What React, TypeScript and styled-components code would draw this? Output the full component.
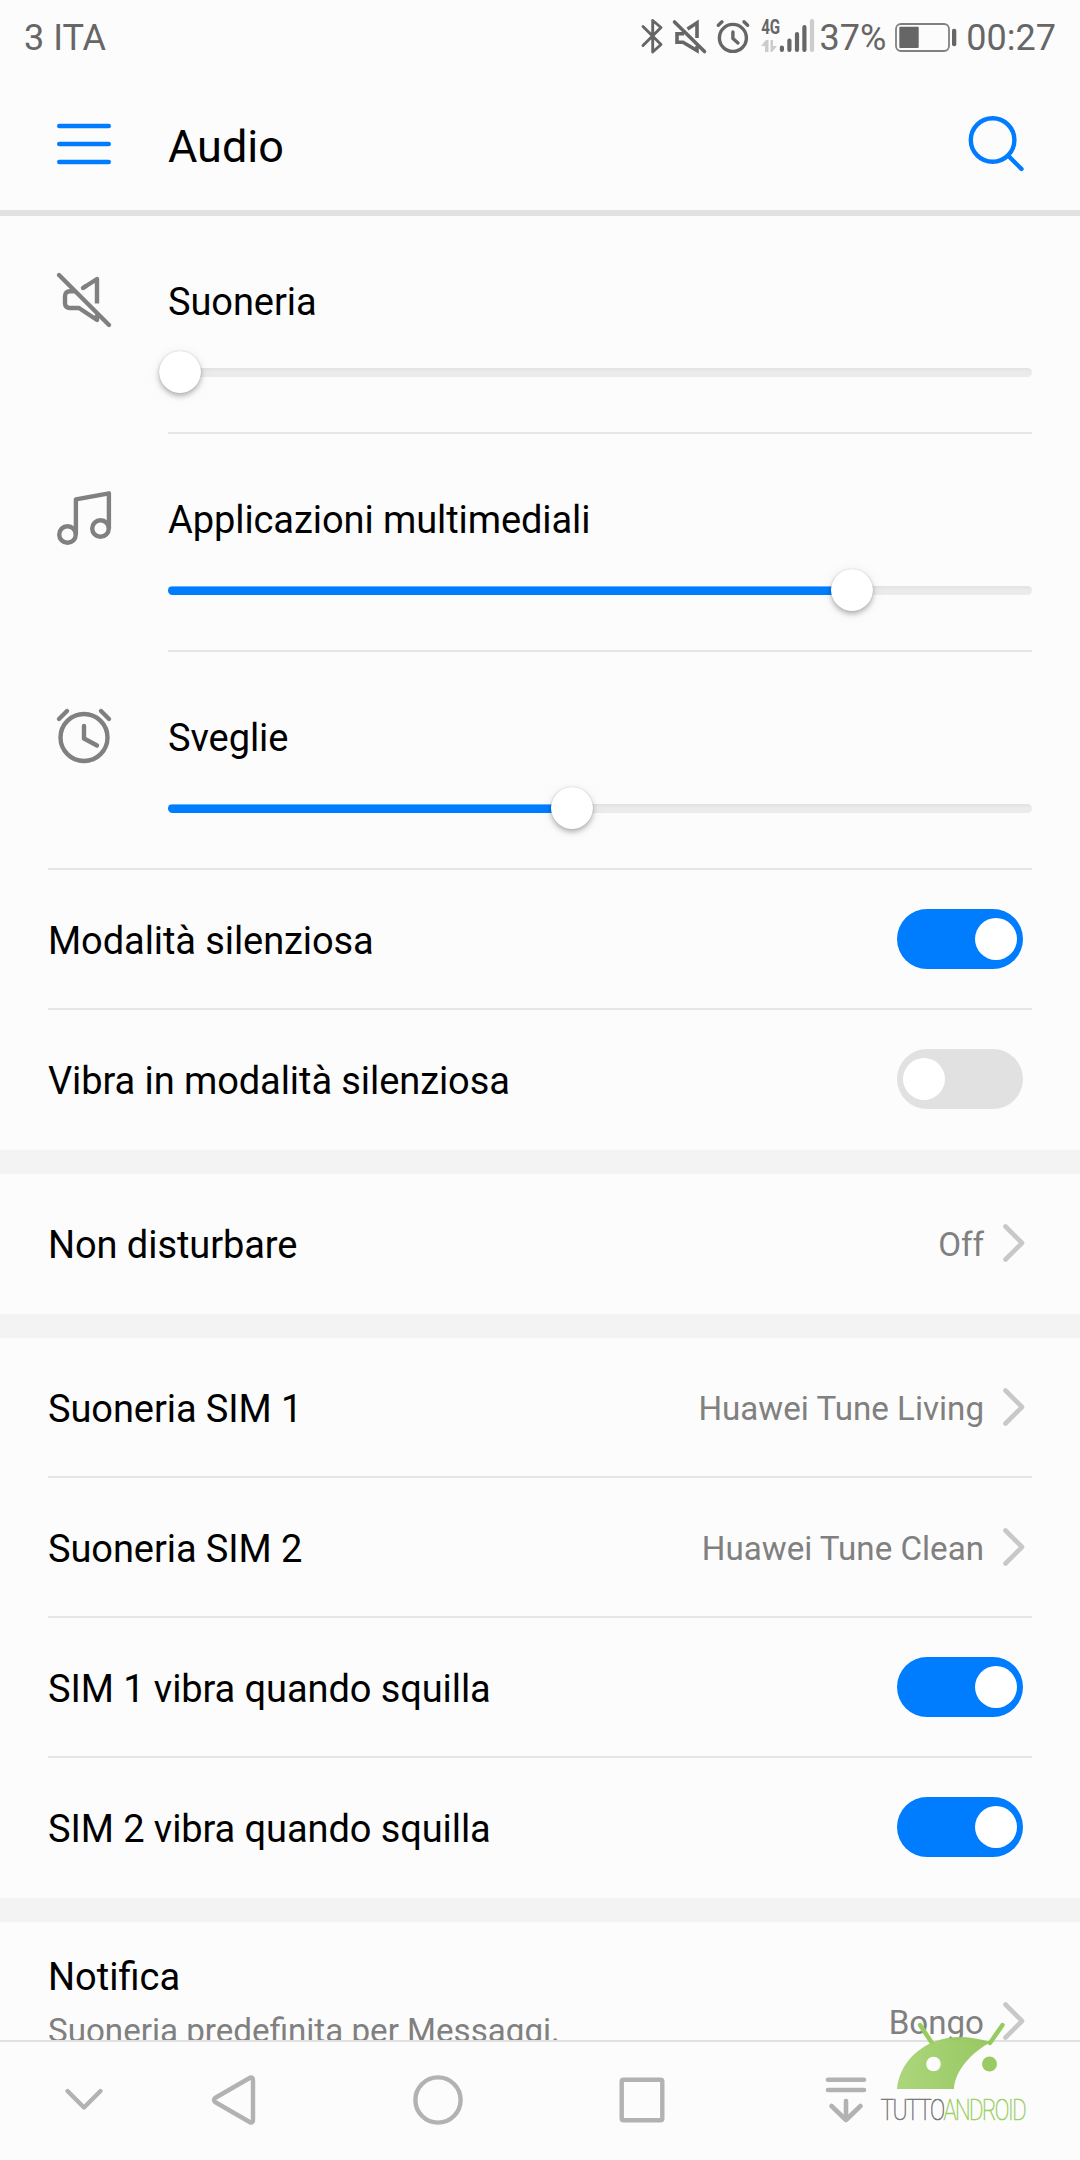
import React from 'react';
import styled, { createGlobalStyle } from 'styled-components';

const GlobalStyle = createGlobalStyle`
  * { box-sizing: border-box; }
  body { margin: 0; background: #fcfcfc; font-family: Roboto, sans-serif; }
  svg { display: block; flex: none; overflow: visible; }
`;

const BLUE = '#007dff';

const Screen = styled.div`
  position: relative;
  width: 1080px;
  height: 2160px;
  display: flex;
  flex-direction: column;
  overflow: hidden;
  background: #fcfcfc;
  color: #000;
`;

const StatusBar = styled.header`
  height: 72px;
  flex: none;
  display: flex;
  align-items: center;
  padding: 0 24px;
  color: #666;
  font-size: 36px;
  line-height: 44px;
`;

const Carrier = styled.span`
  flex: 1;
  padding-top: 4px;
`;

const StatusText = styled.span<{ $left?: number }>`
  padding-top: 4px;
  margin-left: ${(p) => p.$left ?? 0}px;
`;

const StatusIcon = styled.svg<{ $left?: number }>`
  margin-left: ${(p) => p.$left ?? 0}px;
`;

const TitleBar = styled.div`
  height: 144px;
  flex: none;
  display: flex;
  align-items: center;
  padding: 4px 54px 0;
  border-bottom: 6px solid #e1e1e1;
`;

const Title = styled.h1`
  flex: 1;
  margin: 8px 0 0 54px;
  font-size: 45px;
  font-weight: 400;
  line-height: 54px;
`;

const List = styled.main`
  flex: 1;
  min-height: 0;
  overflow: hidden;
`;

const Section = styled.section`
  & + & { border-top: 24px solid #f3f3f3; }
`;

const VolumeRow = styled.div<{ $full?: boolean }>`
  height: 218px;
  display: flex;
  margin: 0 48px;
  padding-left: 6px;
  border-bottom: ${(p) => (p.$full ? '2px solid #e6e6e6' : 'none')};
`;

const VolumeIcon = styled.svg`
  margin: 54px 60px 0 0;
`;

const VolumeBody = styled.div<{ $full?: boolean }>`
  flex: 1;
  padding-top: 62px;
  border-bottom: ${(p) => (p.$full ? 'none' : '2px solid #e6e6e6')};
`;

const Label = styled.div`
  font-size: 38px;
  line-height: 48px;
  letter-spacing: -0.08px;
`;

const NoticeLabel = styled(Label)`
  letter-spacing: normal;
`;

const Track = styled.div`
  position: relative;
  height: 9px;
  margin-top: 42px;
  border-radius: 5px;
  background: linear-gradient(#e2e2e2, #ebebeb 45%);
`;

const Fill = styled.div`
  height: 9px;
  border-radius: 5px;
  background: linear-gradient(#66b1ff 1px, ${BLUE} 1px);
`;

const Thumb = styled.div`
  position: absolute;
  top: -17px;
  width: 42px;
  height: 42px;
  border-radius: 50%;
  background: #fff;
  transform: translateX(-50%);
  box-shadow: 0 3px 5px rgba(0, 0, 0, 0.25), 0 2px 14px rgba(0, 0, 0, 0.07), 0 0 1px rgba(0, 0, 0, 0.25);
`;

const Row = styled.div`
  height: 140px;
  display: flex;
  align-items: center;
  margin: 0 48px;
  border-bottom: 2px solid #e6e6e6;
  &:last-child { border-bottom-color: transparent; }
`;

const RowLabel = styled(Label)`
  flex: 1;
  padding-top: 3px;
`;

const Value = styled.span`
  padding-top: 4px;
  margin-right: 19px;
  color: #808080;
  font-size: 33.15px;
  line-height: 42px;
`;

const Switch = styled.div<{ $on: boolean }>`
  width: 126px;
  height: 60px;
  margin-right: 9px;
  padding: 9px 6px;
  display: flex;
  justify-content: ${(p) => (p.$on ? 'flex-end' : 'flex-start')};
  border-radius: 30px;
  background: ${(p) => (p.$on ? BLUE : '#e1e1e1')};
`;

const Knob = styled.div`
  width: 42px;
  height: 42px;
  border-radius: 50%;
  background: #fff;
`;

const NoticeRow = styled.div`
  height: 200px;
  display: flex;
  margin: 0 48px;
  padding-top: 31px;
`;

const NoticeText = styled.div`
  flex: 1;
`;

const Summary = styled.div`
  margin-top: 10px;
  color: #808080;
  font-size: 33.15px;
  line-height: 40px;
`;

const NoticeValue = styled.div`
  display: flex;
  align-items: center;
  height: 136px;
`;

const NavBar = styled.nav`
  height: 120px;
  flex: none;
  display: flex;
  align-items: center;
  padding-bottom: 2px;
  border-top: 2px solid #e1e1e1;
`;

const NavIcon = styled.svg<{ $left: number }>`
  margin-left: ${(p) => p.$left}px;
`;

const Watermark = styled.svg`
  position: absolute;
  left: 880px;
  top: 2020px;
`;

const MuteIcon = () => (
  <VolumeIcon width="54" height="54" viewBox="0 -3.5 54 54" fill="none" stroke="#808080" strokeWidth="4.4" strokeLinecap="round">
    <path d="M5 1.5 L55 51.5" />
    <path d="M29 14.5 L43 5.5 V30" strokeLinejoin="round" strokeLinecap="butt" />
    <path d="M29 14.5 L32 12.5" />
    <path d="M22 17.8 H16 Q11 17.8 11 22.8 V29.5 Q11 34.5 16 34.5 H25 L43 46.5 V41" strokeLinecap="butt" strokeLinejoin="round" />
  </VolumeIcon>
);

const MusicIcon = () => (
  <VolumeIcon width="54" height="54" viewBox="0 0 54 54" fill="none" stroke="#808080" strokeWidth="4.4" strokeLinejoin="round">
    <circle cx="13.5" cy="46.5" r="8.3" />
    <circle cx="46.5" cy="40.5" r="8.3" />
    <path d="M21.9 46.5 V11.3 L54.9 5.3 V40.5" />
  </VolumeIcon>
);

const AlarmIcon = () => (
  <VolumeIcon width="54" height="54" viewBox="0 0 54 54" fill="none" stroke="#808080" strokeWidth="4.4" strokeLinecap="round">
    <circle cx="30" cy="31.5" r="23.5" />
    <path d="M30 20 V32.5 L43 39.5 M5 13 L13 5 M47 5 L55 13" strokeLinejoin="round" />
  </VolumeIcon>
);

const Chevron = () => (
  <svg width="29" height="42" viewBox="0 0 29 42" fill="none" stroke="#c8c8c8" strokeWidth="4.6" strokeLinecap="round" strokeLinejoin="round">
    <path d="M2.5 4.5 L19 21 L2.5 37.5" />
  </svg>
);

type Volume = { label: string; icon: React.ReactNode; level: number };

const volumes: Volume[] = [
  { label: 'Suoneria', icon: <MuteIcon />, level: 0 },
  { label: 'Applicazioni multimediali', icon: <MusicIcon />, level: 0.8155 },
  { label: 'Sveglie', icon: <AlarmIcon />, level: 0.4757 },
];

const Slider = ({ level }: { level: number }) => {
  const x = 12 + level * 824;
  return (
    <Track>
      {level > 0 && <Fill style={{ width: x }} />}
      <Thumb style={{ left: x }} />
    </Track>
  );
};

const ToggleRow = ({ label, on }: { label: string; on: boolean }) => (
  <Row>
    <RowLabel>{label}</RowLabel>
    <Switch $on={on}><Knob /></Switch>
  </Row>
);

const LinkRow = ({ label, value }: { label: string; value: string }) => (
  <Row>
    <RowLabel>{label}</RowLabel>
    <Value>{value}</Value>
    <Chevron />
  </Row>
);

export default function App() {
  return (
    <Screen>
      <GlobalStyle />
      <StatusBar>
        <Carrier>3 ITA</Carrier>
        <StatusIcon width="22" height="36" viewBox="0 0 22 36" fill="none" stroke="#666" strokeWidth="2.9" strokeLinejoin="round" strokeLinecap="round">
          <path d="M2 8.5 L20 26.5 L11.7 34 V2.5 L20 9.5 L2 27.5" />
        </StatusIcon>
        <StatusIcon $left={9} width="34" height="36" viewBox="0 0 34 36" fill="none" stroke="#666" strokeWidth="3.6">
          <path d="M2.5 4 L32.5 33.5" strokeLinecap="round" />
          <path d="M15.5 11 L25 4.8 V20 M12 15.8 H5 V24.3 H11 L25 32.5 V28" />
        </StatusIcon>
        <StatusIcon $left={10} width="34" height="36" viewBox="0 0 34 36" fill="none" stroke="#666" strokeWidth="3.4" strokeLinecap="round" strokeLinejoin="round">
          <circle cx="16.9" cy="19.9" r="13.5" />
          <path d="M16.9 14 V20.5 L22 25 M2.3 7.3 L6 3.8 M28 3.8 L31.6 7.3" />
        </StatusIcon>
        <StatusIcon $left={11} width="56" height="36" viewBox="0 0 56 36">
          <text x="0.2" y="15.7" fontFamily="Roboto, sans-serif" fontWeight="700" fontSize="19.5" textLength="19" lengthAdjust="spacingAndGlyphs" fill="#666">4G</text>
          <path d="M0 28 L5 22 H7.5 V34 H4 V28 Z M9.5 22 H12 V28 H16 L11 34 H9.5 Z" fill="#ccc" />
          <g strokeWidth="4.2" strokeLinecap="round" stroke="#666">
            <path d="M20.9 29.5 V31.9 M28.4 22.5 V31.9 M36 16 V31.9 M43.4 9.2 V31.9" />
            <path d="M51 3.2 V31.9" stroke="#ccc" />
          </g>
        </StatusIcon>
        <StatusText $left={3}>37%</StatusText>
        <StatusIcon $left={9} width="62" height="36" viewBox="0 0 62 36">
          <rect x="1" y="6" width="53" height="27" rx="5" fill="none" stroke="#808080" strokeWidth="1.8" />
          <rect x="4.3" y="8.8" width="19.4" height="21.2" rx="1" fill="#666" />
          <rect x="57" y="10.7" width="4.3" height="17.6" rx="2" fill="#666" />
        </StatusIcon>
        <StatusText $left={9}>00:27</StatusText>
      </StatusBar>

      <TitleBar>
        <svg width="60" height="60" viewBox="0 0 60 60" stroke={BLUE} strokeWidth="4.6" strokeLinecap="round">
          <path d="M5.3 13 H54.7 M5.3 31 H54.7 M5.3 49 H54.7" />
        </svg>
        <Title>Audio</Title>
        <svg width="60" height="60" viewBox="0 0 60 60" fill="none" stroke={BLUE} strokeWidth="4.4" strokeLinecap="round">
          <circle cx="26.6" cy="27" r="21.8" />
          <path d="M42.5 43 L55.5 56" />
        </svg>
      </TitleBar>

      <List>
        <Section>
          {volumes.map((v, i) => (
            <VolumeRow key={v.label} $full={i === 2}>
              {v.icon}
              <VolumeBody $full={i === 2}>
                <Label>{v.label}</Label>
                <Slider level={v.level} />
              </VolumeBody>
            </VolumeRow>
          ))}
          <ToggleRow label="Modalità silenziosa" on />
          <ToggleRow label="Vibra in modalità silenziosa" on={false} />
        </Section>
        <Section>
          <LinkRow label="Non disturbare" value="Off" />
        </Section>
        <Section>
          <LinkRow label="Suoneria SIM 1" value="Huawei Tune Living" />
          <LinkRow label="Suoneria SIM 2" value="Huawei Tune Clean" />
          <ToggleRow label="SIM 1 vibra quando squilla" on />
          <ToggleRow label="SIM 2 vibra quando squilla" on />
        </Section>
        <Section>
          <NoticeRow>
            <NoticeText>
              <NoticeLabel>Notifica</NoticeLabel>
              <Summary>Suoneria predefinita per Messaggi.</Summary>
            </NoticeText>
            <NoticeValue>
              <Value>Bongo</Value>
              <Chevron />
            </NoticeValue>
          </NoticeRow>
        </Section>
      </List>

      <NavBar>
        <NavIcon $left={64} width="40" height="50" viewBox="0 0 40 50" fill="none" stroke="#b2b2b2" strokeWidth="4.4" strokeLinecap="round" strokeLinejoin="round">
          <path d="M3.5 16 L20 32.5 L36.5 16" />
        </NavIcon>
        <NavIcon $left={107} width="46" height="50" viewBox="0 0 46 50" fill="none" stroke="#b2b2b2" strokeWidth="4.4" strokeLinejoin="round">
          <path d="M39.5 2.5 L4 23 Q2 25 4 27 L39.5 47.5 Q42 47.5 42 45 V5 Q42 2.5 39.5 2.5 Z" />
        </NavIcon>
        <NavIcon $left={156} width="50" height="50" viewBox="0 0 50 50" fill="none" stroke="#b2b2b2" strokeWidth="4.4">
          <circle cx="25" cy="25" r="22.6" />
        </NavIcon>
        <NavIcon $left={154} width="50" height="50" viewBox="0 0 50 50" fill="none" stroke="#b2b2b2" strokeWidth="4.4">
          <rect x="4.7" y="4.7" width="40.6" height="40.6" rx="1.8" />
        </NavIcon>
        <NavIcon $left={158} width="42" height="50" viewBox="0 0 42 50" fill="none" stroke="#b2b2b2" strokeWidth="4.6" strokeLinecap="round" strokeLinejoin="round">
          <path d="M3 4.7 H39 M3 15 H39 M21 26 V45 M6.5 31 L21 45 L35.5 31" />
        </NavIcon>
      </NavBar>

      <Watermark width="150" height="110" viewBox="0 0 150 110">
        <defs>
          <linearGradient id="leaf" x1="0" y1="0" x2="1" y2="0">
            <stop offset="0" stopColor="#a8d475" />
            <stop offset="1" stopColor="#92c55a" />
          </linearGradient>
        </defs>
        <path d="M40 5 L52 23 M122.5 5 L110 23" stroke="#96cb5f" strokeWidth="4.4" strokeLinecap="round" />
        <path d="M17 69 C20 38 48 17 79 17 C90 17 100 19 111 22 C92 32 75 50 74 69 Z" fill="url(#leaf)" opacity="0.95" />
        <circle cx="53.5" cy="44" r="7.3" fill="#fcfcfc" />
        <circle cx="109.5" cy="44" r="7.5" fill="#9aca64" />
        <g fontFamily="Roboto, sans-serif" fontWeight="100" fontSize="29" letterSpacing="-2" strokeWidth="0.6">
          <text x="0.5" y="100" fill="#777" stroke="#777" textLength="63" lengthAdjust="spacingAndGlyphs">TUTTO</text>
          <text x="63.5" y="100" fill="#9ccf66" stroke="#9ccf66" textLength="81.5" lengthAdjust="spacingAndGlyphs">ANDROID</text>
        </g>
      </Watermark>
    </Screen>
  );
}
